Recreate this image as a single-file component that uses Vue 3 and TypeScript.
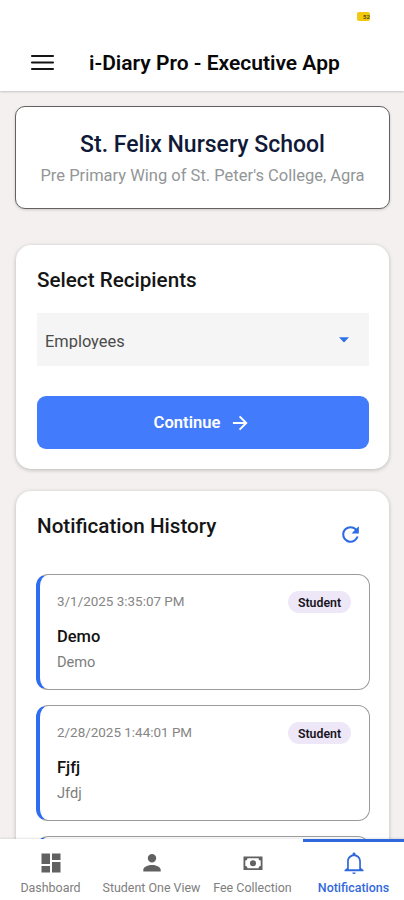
<script setup lang="ts">
interface Notice {
  time: string
  audience: string
  title: string
  body: string
}

interface Tab {
  id: string
  label: string
  active?: boolean
}

const notices: Notice[] = [
  { time: '3/1/2025 3:35:07 PM', audience: 'Student', title: 'Demo', body: 'Demo' },
  { time: '2/28/2025 1:44:01 PM', audience: 'Student', title: 'Fjfj', body: 'Jfdj' },
]

const tabs: Tab[] = [
  { id: 'dashboard', label: 'Dashboard' },
  { id: 'student', label: 'Student One View' },
  { id: 'fee', label: 'Fee Collection' },
  { id: 'notifications', label: 'Notifications', active: true },
]
</script>

<template>
  <div class="app">
    <header class="header">
      <div class="status">
        <span class="battery"><b>52</b></span>
      </div>
      <div class="bar">
        <svg class="menu" viewBox="0 0 24 18" aria-hidden="true">
          <path d="M1.500 2h21M1.500 8.500h21M1.500 15h21" />
        </svg>
        <h1>i-Diary Pro - Executive App</h1>
      </div>
    </header>

    <main class="content">
      <section class="school">
        <h2>St. Felix Nursery School</h2>
        <p>Pre Primary Wing of St. Peter's College, Agra</p>
      </section>

      <section class="card recipients">
        <h3>Select Recipients</h3>
        <div class="select">
          <span>Employees</span>
          <svg viewBox="0 0 10 6" aria-hidden="true"><path d="M0 .3h10L5 5.6z" /></svg>
        </div>
        <button class="continue" type="button">
          <span>Continue</span>
          <svg viewBox="0 0 24 24" aria-hidden="true"><path d="M3.500 12h15.500M11.500 4l8 8-8 8" /></svg>
        </button>
      </section>

      <section class="card history">
        <div class="history-head">
          <h3>Notification History</h3>
          <svg viewBox="0 0 24 24" aria-hidden="true">
            <path d="M17.650 6.350A7.960 7.960 0 0 0 12 4a8 8 0 1 0 7.730 10h-2.080A6 6 0 1 1 12 6c1.660 0 3.140.69 4.220 1.780L13 11h7V4z" />
          </svg>
        </div>
        <article v-for="n in notices" :key="n.time" class="notice">
          <div class="row">
            <time>{{ n.time }}</time>
            <span class="badge">{{ n.audience }}</span>
          </div>
          <h4>{{ n.title }}</h4>
          <p>{{ n.body }}</p>
        </article>
        <article class="notice"></article>
      </section>
    </main>

    <nav class="tabs">
      <a v-for="t in tabs" :key="t.id" class="tab" :class="[t.id, { active: t.active }]">
        <svg viewBox="0 0 24 24" aria-hidden="true">
          <path v-if="t.id === 'dashboard'" d="M2.500 13h8.500V2.500H2.500zm0 8.500h8.500v-6.500H2.500zm10.500 0h8.500V11H13zm0-19V9h8.500V2.500z" />
          <path v-else-if="t.id === 'student'" d="M12 11.500a4.200 4.200 0 1 0 0-8.400 4.200 4.200 0 0 0 0 8.400zM3.300 20.500v-1.700c0-3 5.200-4.700 8.700-4.700s8.700 1.700 8.700 4.700v1.700z" />
          <path
            v-else-if="t.id === 'fee'"
            fill-rule="evenodd"
            d="M2.500 5.500h19v13.500h-19zM6.500 7.300A2.200 2.200 0 0 1 4.300 9.500v5.500a2.200 2.200 0 0 1 2.200 2.200h11a2.200 2.200 0 0 1 2.200-2.200V9.500a2.200 2.200 0 0 1-2.200-2.200zM12 9.200a3.050 3.050 0 1 1 0 6.100 3.050 3.050 0 0 1 0-6.100z"
          />
          <path
            v-else
            fill-rule="evenodd"
            d="M10.300 21.400h3.400a1.700 1.700 0 0 1-3.400 0zM12 1.500c-.9 0-1.500.7-1.500 1.500v.6C7.200 4.300 5.100 7 5.100 10.400V17l-2.600 2v1.300h19V19l-2.600-2v-6.600c0-3.400-2.100-6.100-5.400-6.800V3c0-.8-.6-1.500-1.500-1.500zm0 3.700c3 0 5.200 2.300 5.200 5.200v7.900H6.800v-7.900C6.800 7.500 9 5.200 12 5.200z"
          />
        </svg>
        <span>{{ t.label }}</span>
      </a>
    </nav>
  </div>
</template>

<style>
body {
  background: #f3f0ef;
}
</style>

<style scoped>
.app {
  width: 404px;
  height: 900px;
  display: flex;
  flex-direction: column;
  overflow: hidden;
  background: #f3f0ef;
  font-family: Roboto, "Liberation Sans", sans-serif;
}

h1, h2, h3, h4, p {
  margin: 0;
  font-weight: 500;
  white-space: nowrap;
}

.header {
  flex: none;
  height: 91px;
  background: #fff;
  box-shadow: 0 1px 2px rgba(0, 0, 0, 0.18);
}

.status {
  height: 34px;
  display: flex;
  justify-content: flex-end;
  padding: 12px 34px 0 0;
  box-sizing: border-box;
}

.battery {
  width: 13px;
  height: 9px;
  border-radius: 2px;
  background: #f2c90c;
  font-size: 6px;
  line-height: 10px;
  text-align: right;
  color: #594c17;
}

.bar {
  height: 57px;
  display: flex;
  align-items: center;
  padding-left: 30px;
}

.menu {
  width: 25px;
  height: 18px;
  fill: none;
  stroke: #151515;
  stroke-width: 2.1;
  stroke-linecap: round;
}

h1 {
  margin-left: 34px;
  font-size: 21px;
  line-height: 24px;
  font-weight: 600;
  color: #080808;
}

.content {
  flex: 1;
  min-height: 0;
  overflow: hidden;
  padding: 15px 14px 0 15px;
}

.school {
  height: 103px;
  box-sizing: border-box;
  border: 1px solid #626262;
  border-radius: 10px;
  background: #fff;
  padding-top: 23px;
  text-align: center;
  box-shadow: 0 1px 3px rgba(0, 0, 0, 0.16);
}

.school h2 {
  font-size: 23px;
  line-height: 30px;
  color: #101a38;
}

.school p {
  margin-top: 4px;
  font-size: 16.5px;
  line-height: 24px;
  font-weight: 400;
  color: #929697;
}

.card {
  margin: 0 1px;
  padding: 0 20px 0 21px;
  border-radius: 15px;
  background: #fff;
  box-shadow: 0 1px 4px rgba(0, 0, 0, 0.24);
}

.recipients {
  margin-top: 36px;
  height: 224px;
  padding-top: 22px;
  box-sizing: border-box;
}

h3 {
  font-size: 20.65px;
  line-height: 26px;
  color: #151515;
}

.select {
  height: 53px;
  margin-top: 20px;
  padding: 4px 20px 0 8px;
  box-sizing: border-box;
  display: flex;
  align-items: center;
  justify-content: space-between;
  background: #f5f5f5;
  font-size: 16.4px;
  color: #4b4b4b;
}

/* The picker's line box is short, so descenders are cut just under the baseline. */
.select span {
  height: 17px;
  margin-top: -2px;
  line-height: 19px;
  overflow: hidden;
}

.select svg {
  width: 10px;
  height: 6px;
  margin-top: -4px;
  fill: #2f70e8;
}

.continue {
  width: 100%;
  height: 53px;
  margin-top: 30px;
  padding: 0 2px 0 0;
  border: 0;
  border-radius: 9px;
  display: flex;
  align-items: center;
  justify-content: center;
  gap: 10px;
  background: #427bfb;
  color: #fff;
  font: 600 16.6px Roboto, "Liberation Sans", sans-serif;
}

.continue svg {
  width: 20px;
  height: 20px;
  fill: none;
  stroke: #fff;
  stroke-width: 2.3;
}

.history {
  margin-top: 22px;
  height: 500px;
  padding-top: 22px;
}

.history-head {
  display: flex;
  justify-content: space-between;
  height: 61px;
}

.history-head svg {
  width: 25px;
  height: 25px;
  margin: 9px 6px 0 0;
  fill: #2c6be4;
}

.notice {
  height: 116px;
  margin: 0 -1px 15px;
  padding: 16px 18px 0 17px;
  box-sizing: border-box;
  border: 1px solid #9b9b9b;
  border-left: 4px solid #2c6df2;
  border-radius: 12px;
}

.row {
  height: 26px;
  display: flex;
  justify-content: space-between;
}

time {
  font-size: 13.45px;
  line-height: 22px;
  color: #858585;
}

.badge {
  width: 63px;
  height: 22px;
  border-radius: 11px;
  background: #eee7f8;
  font-size: 12.3px;
  line-height: 24px;
  font-weight: 600;
  text-align: center;
  color: #171320;
}

h4 {
  margin-top: 9px;
  font-size: 16.5px;
  line-height: 22px;
  color: #121212;
}

.notice p {
  margin-top: 4px;
  font-size: 14.6px;
  line-height: 20px;
  font-weight: 400;
  color: #7d7d7d;
}

.tabs {
  flex: none;
  height: 61px;
  display: grid;
  grid-template-columns: repeat(4, 1fr);
  background: #fff;
  box-shadow: 0 -1px 2px rgba(0, 0, 0, 0.1);
}

.tab {
  display: flex;
  flex-direction: column;
  align-items: center;
  padding-top: 9px;
  border-top: 3px solid transparent;
  color: #7e7e7e;
  font-size: 12.45px;
  white-space: nowrap;
}

.tab svg {
  width: 24px;
  height: 24px;
  fill: #616161;
}

.tab span {
  margin-top: 5px;
  line-height: 16px;
}

.tab.active {
  border-color: #2f68dc;
  color: #3268dd;
  font-weight: 500;
}

.tab.active svg {
  fill: #2f68dc;
}
</style>
